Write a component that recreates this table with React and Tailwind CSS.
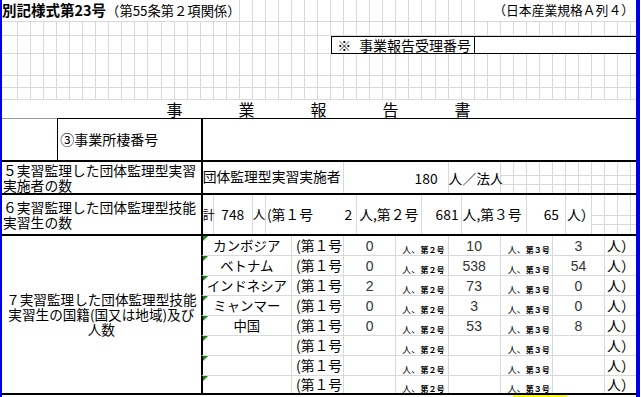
import { Fragment } from "react"

const GRID = "grid grid-cols-[16px_repeat(47,13.05px)_1fr]"
const GL = "border-[#d9d9d9]"

const Blank = ({ last }) => <div className={`border-b ${GL} ${last ? "" : "border-r"}`} />

const BlankRow = ({ h }) => (
  <div className={`${GRID} ${h}`}>
    {Array.from({ length: 49 }, (_, i) => (
      <Blank key={i} last={i === 48} />
    ))}
  </div>
)

// column of stacked blank cells (merged rows on the left)
const Stack = ({ rows, last }) => (
  <div className={`flex flex-col ${GL} ${last ? "" : "border-r"}`}>
    {rows.map((r, i) => (
      <div key={i} className={`${r} ${i < rows.length - 1 ? `border-b ${GL}` : ""}`} />
    ))}
  </div>
)

const countries = [
  { name: "カンボジア", a: "0", b: "10", c: "3" },
  { name: "ベトナム", a: "0", b: "538", c: "54" },
  { name: "インドネシア", a: "2", b: "73", c: "0" },
  { name: "ミャンマー", a: "0", b: "3", c: "0" },
  { name: "中国", a: "0", b: "53", c: "8" },
  { name: "", a: "", b: "", c: "" },
  { name: "", a: "", b: "", c: "" },
  { name: "", a: "", b: "", c: "" },
]

const Num = ({ children }) => (
  <span className="font-['Liberation_Sans',Arial,sans-serif] text-[14px] text-[#333]">{children}</span>
)

const Small = ({ n }) => (
  <span className="whitespace-nowrap">
    <span className="text-[9px]">人、</span>
    <span className="text-[8px] font-bold">第{n}号</span>
  </span>
)

export default function App() {
  const t5Rows = ["h-[14px]", "h-[9px]", "flex-1"]
  const t6Rows = ["h-[21px]", "h-[9px]", "flex-1"]

  return (
    <div className="w-[641px] h-[397px] bg-white flex overflow-hidden text-black font-['Noto_Sans_CJK_JP',sans-serif]">
      <div className="w-[2px] bg-[#0000e6]" />
      <div className="w-[634px] flex flex-col">
        {/* title row */}
        <div className={`${GRID} h-[22px]`}>
          <div className={`col-span-18 border-r border-b ${GL} flex items-center whitespace-nowrap leading-none`}>
            <span className="font-bold text-[14.5px]">別記様式第23号</span>
            <span className="text-[13.3px]">（第55条第２項関係）</span>
          </div>
          {Array.from({ length: 18 }, (_, i) => (
            <Blank key={i} />
          ))}
          <div className={`col-span-13 border-b ${GL} flex items-center justify-end pr-[2px] text-[12.8px] leading-none whitespace-nowrap`}>
            （日本産業規格Ａ列４）
          </div>
        </div>

        <BlankRow h="h-[14px]" />

        <div className={`${GRID} h-[18px]`}>
          {Array.from({ length: 25 }, (_, i) => (
            <Blank key={i} last={i === 24} />
          ))}
          <div className="col-span-11 border border-black flex items-center pl-[5px] text-[14px] leading-none whitespace-nowrap">
            ※<span className="ml-[8px]">事業報告受理番号</span>
          </div>
          <div className="col-span-13 border-y border-black" />
        </div>

        <BlankRow h="h-[22px]" />
        <BlankRow h="h-[12px]" />
        <BlankRow h="h-[12px]" />

        <div className="h-[18px] flex">
          <div className="ml-[164.5px] w-[304px] flex items-center justify-between text-[16px] leading-none">
            <span>事</span>
            <span>業</span>
            <span>報</span>
            <span>告</span>
            <span>書</span>
          </div>
        </div>

        {/* ③ row */}
        <div className={`${GRID} h-[44px] border-b-2 border-black`}>
          <div className="col-span-4 border-t border-[#9a9a9a]" />
          <div className="col-span-11 border-t border-l border-black flex items-center pl-[2px] text-[14px] whitespace-nowrap">
            ③事業所棲番号
          </div>
          <div className="col-span-34 border-t border-l-2 border-black" />
        </div>

        {/* 5 */}
        <div className={`${GRID} h-[33px] border-b-2 border-black text-[13.8px]`}>
          <div className="col-span-15 flex flex-col justify-center pl-[1px] leading-[14.5px] whitespace-nowrap">
            <span>５実習監理した団体監理型実習</span>
            <span>実施者の数</span>
          </div>
          <div className={`col-span-11 border-r ${GL} border-l-2 border-l-black flex items-center pb-[3px] whitespace-nowrap`}>
            団体監理型実習実施者
          </div>
          <div className={`col-span-8 border-r ${GL} flex items-center justify-end pr-[10px] pt-[2px]`}>180</div>
          <div className={`col-span-4 border-r ${GL} flex items-center pt-[2px] whitespace-nowrap`}>人／法人</div>
          {Array.from({ length: 11 }, (_, i) => (
            <Stack key={i} rows={t5Rows} last={i === 10} />
          ))}
        </div>

        {/* 6 */}
        <div className={`${GRID} h-[41px] border-b-2 border-black text-[13.8px]`}>
          <div className="col-span-15 flex flex-col justify-center pl-[1px] leading-[14.5px] whitespace-nowrap">
            <span>６実習監理した団体監理型技能</span>
            <span>実習生の数</span>
          </div>
          <div className={`border-r ${GL} border-l-2 border-l-black flex items-center text-[12px] whitespace-nowrap`}>計</div>
          <div className={`col-span-3 border-r ${GL} flex items-center justify-center`}>748</div>
          <div className={`border-r ${GL} flex items-center text-[12.5px] whitespace-nowrap`}>人</div>
          <div className={`col-span-7 border-r ${GL} flex items-center justify-between pl-[1px] pr-[4px] whitespace-nowrap`}>
            <span>(第１号</span>
            <span>2</span>
          </div>
          <div className={`col-span-5 border-r ${GL} flex items-center pl-[2px] whitespace-nowrap`}>人,第２号</div>
          <div className={`col-span-3 border-r ${GL} flex items-center justify-end pr-[2px]`}>681</div>
          <div className={`col-span-5 border-r ${GL} flex items-center pl-[1px] whitespace-nowrap`}>人,第３号</div>
          <div className={`col-span-3 border-r ${GL} flex items-center justify-end pr-[6px]`}>65</div>
          <div className={`col-span-2 border-r ${GL} flex items-center pl-[1px] whitespace-nowrap`}>人）</div>
          {Array.from({ length: 4 }, (_, i) => (
            <Stack key={i} rows={t6Rows} last={i === 3} />
          ))}
        </div>

        {/* 7 */}
        <div className={`${GRID} grid-rows-[repeat(7,20px)_1fr] h-[159px] border-b-2 border-black`}>
          <div className="col-span-15 row-span-8 flex flex-col items-center justify-center text-[13.6px] leading-[15px] whitespace-nowrap">
            <span>７実習監理した団体監理型技能</span>
            <span>実習生の国籍(国又は地域)及び</span>
            <span>人数</span>
          </div>
          {countries.map((c, i) => {
            const b = i < 7 ? `border-b ${GL}` : ""
            return (
              <Fragment key={i}>
                <div className={`col-span-7 relative border-r ${GL} ${b} border-l-2 border-l-black flex items-center justify-center text-[13.4px] leading-none whitespace-nowrap`}>
                  <svg className="absolute left-0 top-0" width="5" height="5" viewBox="0 0 5 5">
                    <path d="M0 0H5L0 5Z" fill="#128a12" />
                  </svg>
                  {c.name}
                </div>
                <div className={`col-span-4 border-r ${GL} ${b} flex items-center pl-[4px] text-[13.8px] leading-none whitespace-nowrap`}>
                  (第１号
                </div>
                <div className={`col-span-4 border-r ${GL} ${b} flex items-center justify-center leading-none`}>
                  <Num>{c.a}</Num>
                </div>
                <div className={`col-span-4 border-r ${GL} ${b} flex items-center pl-[6px] leading-none`}>
                  <Small n="２" />
                </div>
                <div className={`col-span-4 border-r ${GL} ${b} flex items-center justify-center leading-none`}>
                  <Num>{c.b}</Num>
                </div>
                <div className={`col-span-4 border-r ${GL} ${b} flex items-center pl-[7px] leading-none`}>
                  <Small n="３" />
                </div>
                <div className={`col-span-4 border-r ${GL} ${b} flex items-center justify-center leading-none`}>
                  <Num>{c.c}</Num>
                </div>
                <div className={`col-span-3 ${b} flex items-center pl-[2px] text-[13.8px] leading-none whitespace-nowrap`}>
                  人）
                </div>
              </Fragment>
            )
          })}
        </div>

        <div className="h-[2px] flex">
          <div className="ml-[511px] w-[54px] bg-[#ffff00]" />
        </div>
      </div>
      <div className="w-[4px] bg-[#0000e6]" />
      <div className="flex-1 bg-white" />
    </div>
  )
}
